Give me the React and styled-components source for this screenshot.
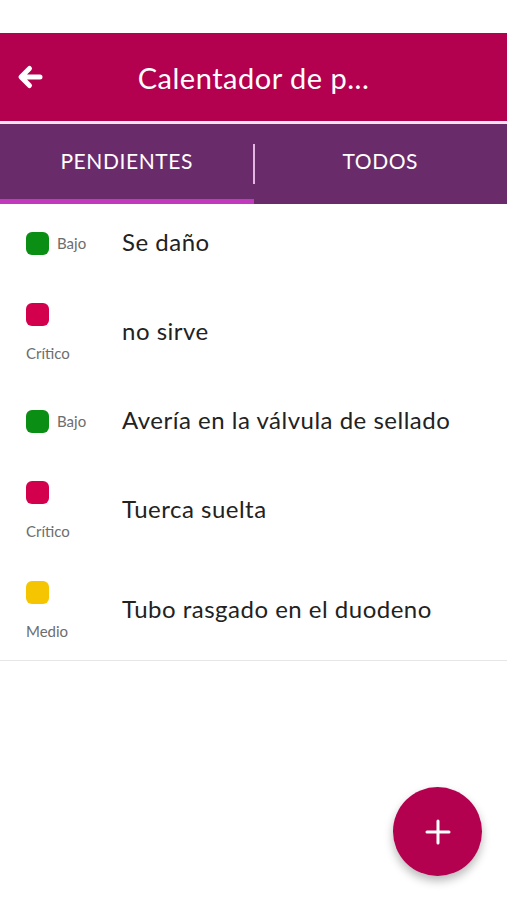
import React, { useState } from "react";
import styled, { createGlobalStyle } from "styled-components";

const GlobalStyle = createGlobalStyle`
  * { box-sizing: border-box; }
  body {
    margin: 0;
    background: #fff;
    font-family: Lato, "Open Sans", sans-serif;
  }
`;

const Screen = styled.div`
  position: relative;
  width: 507px;
  height: 900px;
  background: #fff;
  overflow: hidden;
`;

const StatusSpace = styled.div`
  height: 33px;
`;

const Header = styled.header`
  height: 91px;
  background: #b3004f;
  display: grid;
  grid-template-columns: 60px 1fr 60px;
  align-items: center;
  border-bottom: 3px solid #f7e4ee;
`;

const BackBtn = styled.button`
  background: transparent;
  border: none;
  padding: 0 0 0 16px;
  display: flex;
  align-items: center;
  cursor: pointer;
`;

const Title = styled.h1`
  margin: 0;
  color: #fff;
  font-size: 29px;
  font-weight: 400;
  letter-spacing: 0.5px;
  text-align: center;
  white-space: nowrap;
`;

const Tabs = styled.nav`
  height: 80px;
  background: #6a2b6b;
  display: grid;
  grid-template-columns: 1fr 1fr;
  position: relative;
`;

const Tab = styled.button`
  position: relative;
  background: transparent;
  border: none;
  color: #fff;
  font-family: Lato, sans-serif;
  font-size: 21px;
  letter-spacing: 0.6px;
  text-transform: uppercase;
  cursor: pointer;
  padding: 0 0 2px;
  border-bottom: 5px solid ${(p) => (p.$active ? "#c13abd" : "transparent")};
`;

const Divider = styled.span`
  position: absolute;
  left: 253px;
  top: 20px;
  width: 2px;
  height: 40px;
  background: #e3b7e2;
`;

const List = styled.ul`
  list-style: none;
  margin: 0;
  padding: 0;
  border-bottom: 1px solid #e6e6e6;
`;

const Row = styled.li`
  display: flex;
  align-items: center;
  height: ${(p) => (p.$wrap ? 100 : 78)}px;
  padding-left: 26px;
`;

const Priority = styled.div`
  width: 96px;
  display: flex;
  flex-wrap: wrap;
  align-items: center;
  column-gap: 8px;
  row-gap: 19px;
`;

const Dot = styled.span`
  width: 23px;
  height: 23px;
  border-radius: 6px;
  background: ${(p) => p.$color};
`;

const Level = styled.span`
  font-size: 15px;
  color: #6d6d6d;
  line-height: 16px;
  flex-basis: ${(p) => (p.$wrap ? "100%" : "auto")};
`;

const ItemText = styled.span`
  font-size: 24px;
  line-height: 28px;
  margin-bottom: 3px;
  letter-spacing: 0.5px;
  color: #222;
`;

const Fab = styled.button`
  position: absolute;
  left: 393px;
  top: 787px;
  width: 89px;
  height: 89px;
  border-radius: 50%;
  border: none;
  background: #b3004f;
  box-shadow: 0 5px 10px rgba(0, 0, 0, 0.28);
  display: flex;
  align-items: center;
  justify-content: center;
  cursor: pointer;
`;

const levels = {
  Bajo: { color: "#0a8f14", wrap: false },
  "Crítico": { color: "#d3004e", wrap: true },
  Medio: { color: "#f4c500", wrap: true },
};

const items = [
  { text: "Se daño", level: "Bajo" },
  { text: "no sirve", level: "Crítico" },
  { text: "Avería en la válvula de sellado", level: "Bajo" },
  { text: "Tuerca suelta", level: "Crítico" },
  { text: "Tubo rasgado en el duodeno", level: "Medio" },
];

const App = () => {
  const [tab, setTab] = useState(0);

  return (
    <>
      <GlobalStyle />
      <Screen>
        <StatusSpace />
        <Header>
          <BackBtn aria-label="Volver">
            <svg width="28" height="28" viewBox="0 0 28 28">
              <path
                d="M24 14H6M13.5 5.5L5 14l8.5 8.5"
                fill="none"
                stroke="#fff"
                strokeWidth="5"
                strokeLinecap="round"
                strokeLinejoin="round"
              />
            </svg>
          </BackBtn>
          <Title>Calentador de p...</Title>
          <div />
        </Header>
        <Tabs>
          <Tab $active={tab === 0} onClick={() => setTab(0)}>Pendientes</Tab>
          <Tab $active={tab === 1} onClick={() => setTab(1)}>Todos</Tab>
          <Divider />
        </Tabs>
        <List>
          {items.map((item, i) => {
            const lv = levels[item.level];
            return (
              <Row key={i} $wrap={lv.wrap}>
                <Priority>
                  <Dot $color={lv.color} />
                  <Level $wrap={lv.wrap}>{item.level}</Level>
                </Priority>
                <ItemText>{item.text}</ItemText>
              </Row>
            );
          })}
        </List>
        <Fab aria-label="Agregar">
          <svg width="26" height="26" viewBox="0 0 26 26">
            <path d="M13 2v22M2 13h22" stroke="#fff" strokeWidth="3" strokeLinecap="round" />
          </svg>
        </Fab>
      </Screen>
    </>
  );
};

export default App;
